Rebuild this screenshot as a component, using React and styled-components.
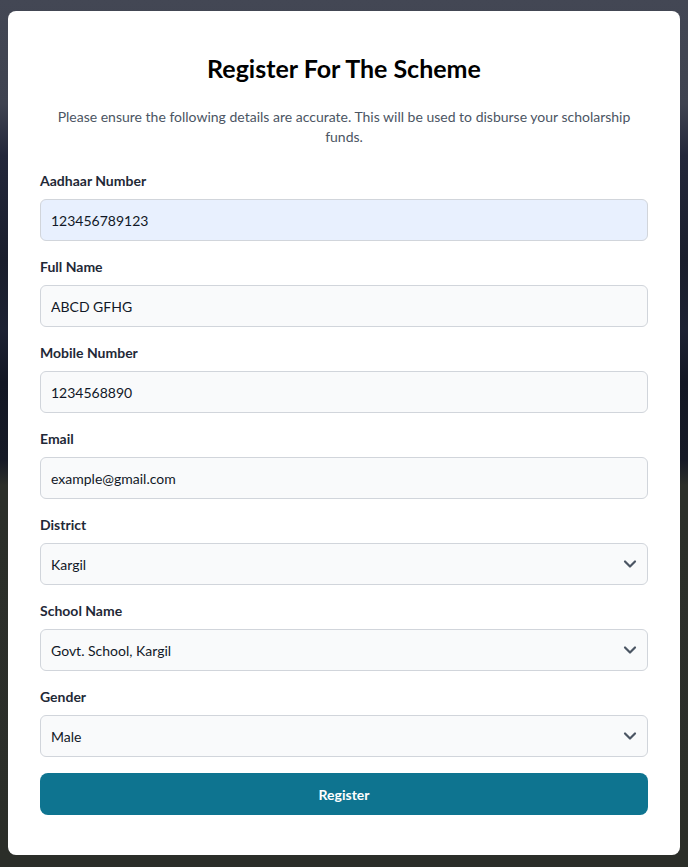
import React from 'react';
import styled, { createGlobalStyle } from 'styled-components';

const GlobalStyle = createGlobalStyle`
  html, body {
    margin: 0;
    padding: 0;
  }
  body {
    font-family: Lato, "Noto Sans", "Liberation Sans", sans-serif;
    background: linear-gradient(
      180deg,
      #434754 0%,
      #3f4350 12%,
      #23273a 18%,
      #1a1e2c 30%,
      #1d2233 38%,
      #131724 44%,
      #161a26 53%,
      #2c2f2a 56%,
      #2b2e29 100%
    );
    min-height: 867px;
  }
`;

const Page = styled.div`
  padding: 11px 8px 12px;
  box-sizing: border-box;
`;

const Card = styled.form`
  background: #fff;
  border-radius: 8px;
  padding: 39px 32px 40px;
  box-sizing: border-box;
  display: flex;
  flex-direction: column;
`;

const Title = styled.h1`
  margin: 0;
  text-align: center;
  font-size: 25px;
  line-height: 36px;
  font-weight: 700;
  color: #000;
`;

const Subtitle = styled.p`
  margin: 21px 0 24px;
  text-align: center;
  font-size: 14px;
  line-height: 20px;
  color: #4b5563;
`;

const Field = styled.div`
  display: flex;
  flex-direction: column;
  margin-bottom: 16px;
`;

const Label = styled.label`
  font-size: 14px;
  line-height: 20px;
  font-weight: 700;
  color: #1f2937;
  margin-bottom: 8px;
`;

const Input = styled.input`
  height: 42px;
  box-sizing: border-box;
  border: 1px solid #d1d5db;
  border-radius: 6px;
  padding: 0 10px;
  font-family: inherit;
  font-size: 14px;
  color: #111827;
  background: ${p => (p.$filled ? '#e8f0fe' : '#f9fafb')};
  outline: none;
`;

const SelectWrap = styled.div`
  position: relative;
`;

const Select = styled.select`
  width: 100%;
  height: 42px;
  box-sizing: border-box;
  border: 1px solid #d1d5db;
  border-radius: 6px;
  padding: 0 36px 0 10px;
  font-family: inherit;
  font-size: 14px;
  color: #111827;
  background: #f9fafb;
  appearance: none;
  outline: none;
`;

const Chevron = styled.svg`
  position: absolute;
  right: 8px;
  top: 50%;
  transform: translateY(-50%);
  pointer-events: none;
`;

const Button = styled.button`
  height: 42px;
  border: none;
  border-radius: 8px;
  background: #0e7490;
  color: #fff;
  font-family: inherit;
  font-size: 14px;
  font-weight: 700;
  cursor: pointer;
`;

const ChevronIcon = () => (
  <Chevron width="20" height="20" viewBox="0 0 20 20" fill="none">
    <path d="M5 7.5l5 5 5-5" stroke="#4b5563" strokeWidth="2.2" strokeLinecap="round" strokeLinejoin="round" />
  </Chevron>
);

const SelectField = ({ label, value }) => (
  <Field>
    <Label>{label}</Label>
    <SelectWrap>
      <Select defaultValue={value}>
        <option>{value}</option>
      </Select>
      <ChevronIcon />
    </SelectWrap>
  </Field>
);

export default function App() {
  return (
    <Page>
      <GlobalStyle />
      <Card onSubmit={e => e.preventDefault()}>
        <Title>Register For The Scheme</Title>
        <Subtitle>
          Please ensure the following details are accurate. This will be used to disburse your scholarship funds.
        </Subtitle>
        <Field>
          <Label>Aadhaar Number</Label>
          <Input $filled defaultValue="123456789123" />
        </Field>
        <Field>
          <Label>Full Name</Label>
          <Input defaultValue="ABCD GFHG" />
        </Field>
        <Field>
          <Label>Mobile Number</Label>
          <Input defaultValue="1234568890" />
        </Field>
        <Field>
          <Label>Email</Label>
          <Input defaultValue="example@gmail.com" />
        </Field>
        <SelectField label="District" value="Kargil" />
        <SelectField label="School Name" value="Govt. School, Kargil" />
        <SelectField label="Gender" value="Male" />
        <Button type="submit">Register</Button>
      </Card>
    </Page>
  );
}
